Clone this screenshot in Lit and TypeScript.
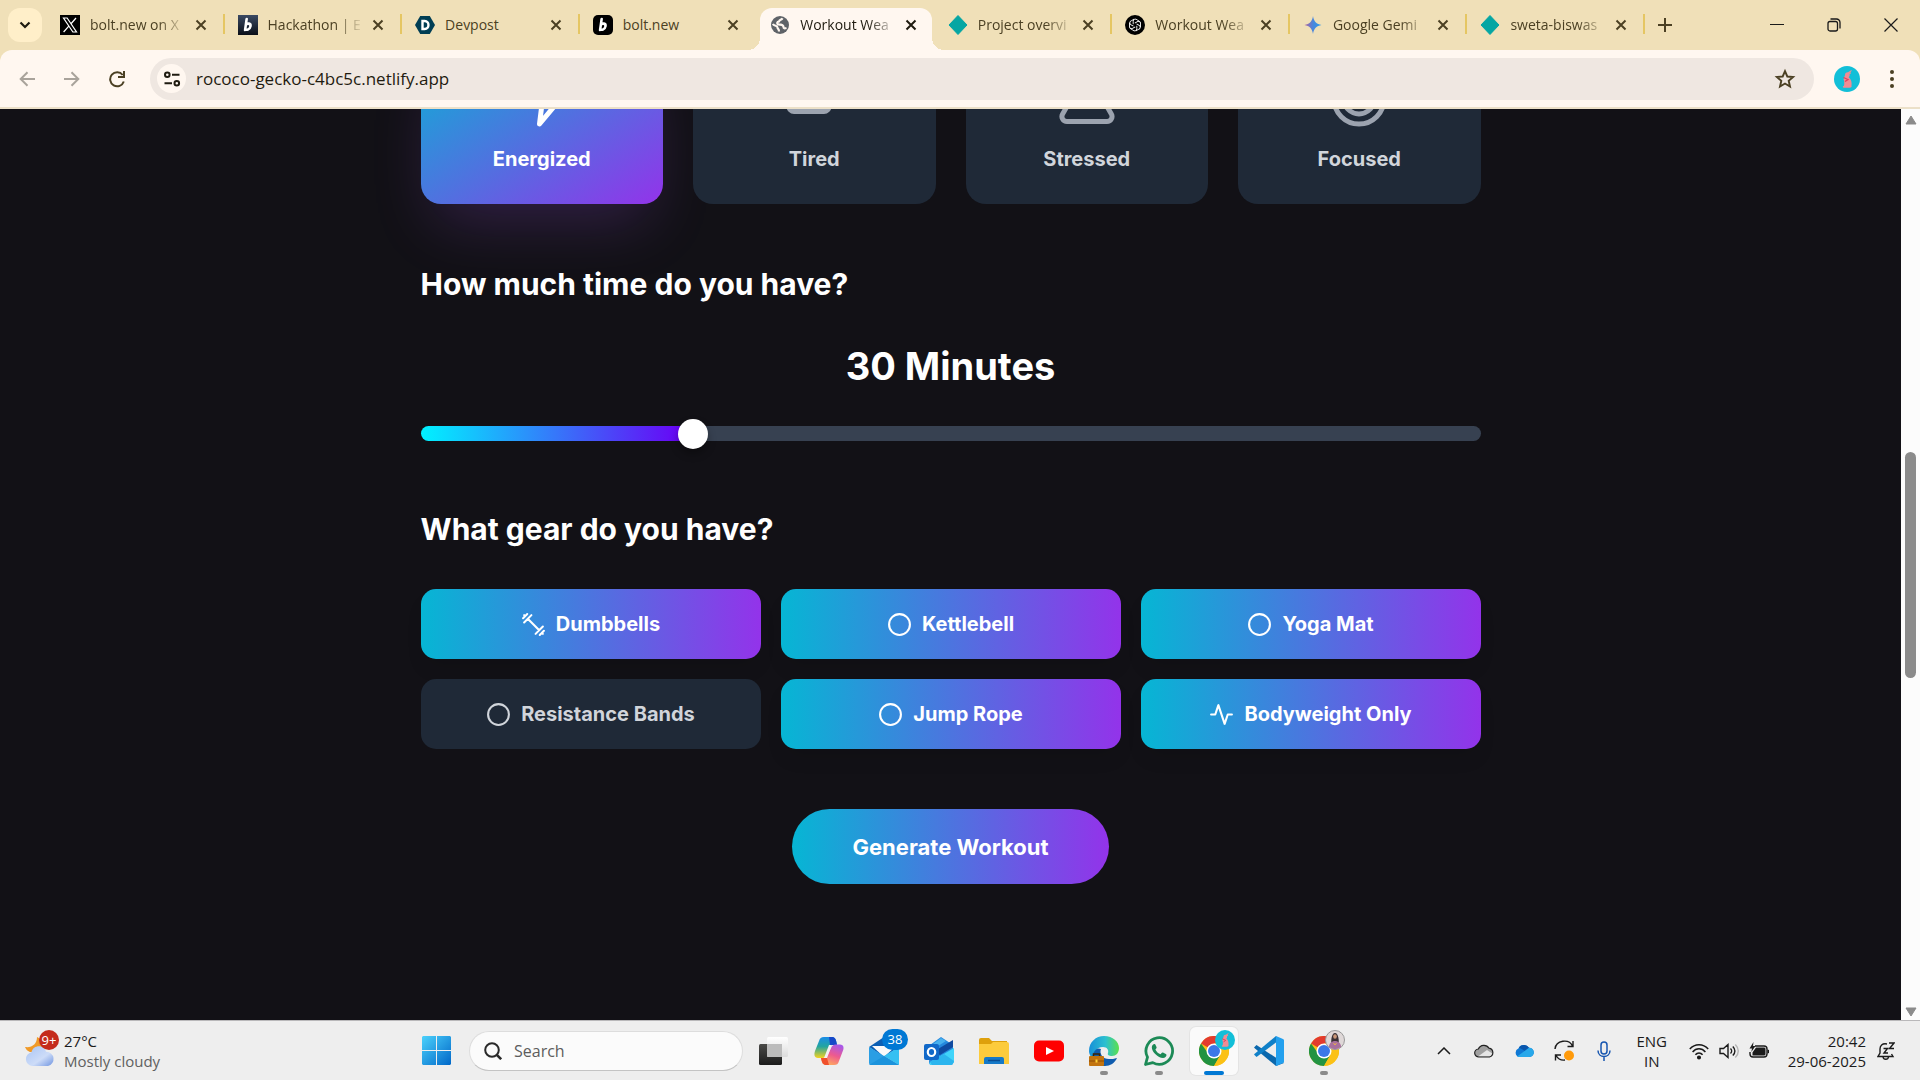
import { LitElement, html, css, svg, TemplateResult } from "lit";
import { customElement, state } from "lit/decorators.js";
import { classMap } from "lit/directives/class-map.js";
import { styleMap } from "lit/directives/style-map.js";

/* ---------- shared icons ---------- */

const closeIcon = html`<svg viewBox="0 0 12 12" width="12" height="12" fill="none" stroke="currentColor" stroke-width="2" aria-hidden="true"><path d="M1.5 1.5l9 9M10.500 1.500l-9 9"/></svg>`;

const boltShape = svg`<g transform="skewX(-8)"><path d="M9.200 4v11M9.200 9.600c1.200-1.400 4.900-1.700 4.900 1.700s-3.700 4.200-4.900 2.600" fill="none" stroke="#fff" stroke-width="2.600" stroke-linecap="round"/></g>`;

const netlifyIcon = html`<svg viewBox="0 0 20 20" width="20" height="20" aria-hidden="true"><path d="M10 .5 19 10l-9 9.500L1 10z" fill="#05a6a3" stroke="#05a6a3" stroke-linejoin="round"/></svg>`;

const petals = [0, 60, 120, 180, 240, 300].map(
  (a) => svg`<path d="M8.200 9.200V6.200a2.200 2.200 0 0 1 3.900-1.300l2.500 1.500" transform=${`rotate(${a} 10 10)`}/>`
);

const favicons: Record<string, TemplateResult> = {
  x: html`<svg viewBox="0 0 20 20" width="20" height="20" aria-hidden="true"><path d="M0 0h20v20H0z"/><path d="M3.500 3h3.600l9.400 14h-3.600zM16 3l-5.200 6M8.800 11.200 3.600 17" fill="none" stroke="#fff" stroke-width="1.200"/></svg>`,
  hackathon: html`<svg viewBox="0 0 20 20" width="20" height="20" aria-hidden="true"><defs><linearGradient id="hk" x2="0" y2="1"><stop stop-color="#3b4a63"/><stop offset="1" stop-color="#0a0f18"/></linearGradient></defs><path d="M0 0h20v20H0z" fill="url(#hk)"/>${boltShape}</svg>`,
  devpost: html`<svg viewBox="0 0 20 20" width="20" height="20" aria-hidden="true"><path d="M5.200 1h9.600L20 10l-5.200 9H5.200L0 10z" fill="#003e54"/><path d="M7.500 6h2.200c5 0 5 8 0 8H7.500z" fill="none" stroke="#fff" stroke-width="2.400"/></svg>`,
  bolt: html`<svg viewBox="0 0 20 20" width="20" height="20" aria-hidden="true"><rect width="20" height="20" rx="5"/>${boltShape}</svg>`,
  globe: html`<svg viewBox="0 0 20 20" width="20" height="20" aria-hidden="true"><circle cx="10" cy="10" r="9" fill="#5f6368"/><path d="M12.500 3.200c-1 2-3 1.300-3.500 3.300-2 0-2.500 2.500-.5 2.800 2.500 0 5 .2 5 2.700 0 1.500 1 1.500 3 1M2.800 9c1.500 2.500 4.500 1 4.700 3.500 0 1.500 1.500 1 1.500 4" fill="none" stroke="#fff7f0" stroke-width="2.200"/></svg>`,
  netlify: netlifyIcon,
  openai: html`<svg viewBox="0 0 20 20" width="20" height="20" aria-hidden="true"><circle cx="10" cy="10" r="10"/><g fill="none" stroke="#fff" stroke-width="0.900">${petals}</g></svg>`,
  gemini: html`<svg viewBox="0 0 20 20" width="20" height="20" aria-hidden="true"><defs><linearGradient id="gm"><stop stop-color="#b0609c"/><stop offset=".5" stop-color="#4a87dd"/><stop offset="1" stop-color="#2a9be8"/></linearGradient></defs><path d="M10 1c.8 5.500 3.500 8.200 8.500 9-5 .8-7.700 3.500-8.500 9-.8-5.500-3.500-8.200-8.500-9 5-.8 7.700-3.500 8.500-9z" fill="url(#gm)"/></svg>`,
};

const bunny = svg`<circle cx="13" cy="13" r="13" fill="#12bfd8"/><path d="M11 9c0-2 1.500-3 3-2.700L17.500 4c.6.3-.8 2.500-2.300 3.200C17.500 5.800 18 7 15.500 8.600c.5 1.300 0 2-.8 2.600 2.500 1.800 3.300 5.500 2.800 8.300.5 1.500-.5 2.200-2 2.200H10c-1.600 0-1.600-1.700 0-2 .6-3 .2-5-.4-6.500z" fill="#f08c94"/><path d="M9.500 11.500l4.500 2-3 2" fill="none" stroke="#e5405a" stroke-width="1.300"/>`;

/* Outline icons share one 24-unit grid with round strokes. */
const outline = (shape: unknown, size: number) => html`<svg viewBox="0 0 24 24" width=${size} height=${size} fill="none" stroke="currentColor" stroke-width="2" stroke-linecap="round" stroke-linejoin="round" aria-hidden="true">${shape}</svg>`;

const shapes: Record<string, unknown> = {
  zap: svg`<path d="M13 2 3 14h9l-1 8 10-12h-9z"/>`,
  battery: svg`<rect x="2" y="7" width="16" height="10" rx="2"/><path d="M22 11v2"/>`,
  triangle: svg`<path d="m21.730 18-8-14a2 2 0 0 0-3.480 0l-8 14A2 2 0 0 0 4 21h16a2 2 0 0 0 1.730-3"/>`,
  target: svg`<circle cx="12" cy="12" r="10"/><circle cx="12" cy="12" r="6"/><circle cx="12" cy="12" r="2"/>`,
  dumbbell: svg`<path d="m6.500 6.500 11 11M21 21l-1-1M3 3l1 1M18 22l4-4M2 6l4-4M3 10l7-7M14 21l7-7"/>`,
  circle: svg`<circle cx="12" cy="12" r="10"/>`,
  activity: svg`<path d="M22 12h-4l-3 9L9 3l-3 9H2"/>`,
};

/* ---------- browser frame ---------- */

interface Tab { icon: string; title: string; active?: boolean; line?: boolean; fade?: boolean }

const tabs: Tab[] = [
  { icon: "x", title: "bolt.new on X", line: true, fade: true },
  { icon: "hackathon", title: "Hackathon | E", line: true, fade: true },
  { icon: "devpost", title: "Devpost", line: true },
  { icon: "bolt", title: "bolt.new" },
  { icon: "globe", title: "Workout Wea", active: true, fade: true },
  { icon: "netlify", title: "Project overvi", line: true, fade: true },
  { icon: "openai", title: "Workout Wea", line: true, fade: true },
  { icon: "gemini", title: "Google Gemi", line: true, fade: true },
  { icon: "netlify", title: "sweta-biswas", line: true, fade: true },
];

@customElement("browser-bar")
class BrowserBar extends LitElement {
  static styles = css`
    :host { display: block; font-family: "Open Sans", "Noto Sans", sans-serif; color: #4b4023; background: #f0e0b8; }
    * { box-sizing: border-box; }
    button { border: 0; padding: 0; background: none; color: inherit; font: inherit; display: grid; place-items: center; }
    svg { display: block; flex: none; }
    .strip { display: flex; height: 50px; padding-left: 8px; align-items: stretch; }
    .search-tabs { width: 34px; height: 34px; margin: 8px 5px 0 0; border-radius: 12px; background: #ffefc9; color: #1f1b10; flex: none; }
    .tabs { display: grid; grid-template-columns: repeat(9, minmax(0, 1fr)); flex: 0 1 1598px; min-width: 0; }
    .tab { position: relative; display: flex; align-items: center; padding: 0 17px 0 13px; min-width: 0; font-size: 14px; }
    .tab-body { display: flex; align-items: center; flex: 1; gap: 10px; min-width: 0; }
    .title { flex: 1; min-width: 0; margin-right: -6px; overflow: hidden; white-space: nowrap; line-height: 20px; }
    .fade { mask-image: linear-gradient(to right, #000 68%, rgba(0, 0, 0, 0.1) 94%); }
    .lined::after { content: ""; position: absolute; right: 0; top: 14px; width: 2px; height: 20px; background: #e5c663; }
    .tab .close { width: 14px; height: 20px; }
    .active { color: #1f1b10; }
    .active::before { content: ""; position: absolute; inset: 8px 3px 0 3px; background: #fff7f0; border-radius: 12px 12px 0 0; }
    .active .tab-body { position: relative; }
    .foot { position: absolute; bottom: 0; width: 12px; height: 12px; }
    .foot-left { left: -9px; background: radial-gradient(circle at 0 0, transparent 12px, #fff7f0 12px); }
    .foot-right { right: -9px; background: radial-gradient(circle at 100% 0, transparent 12px, #fff7f0 12px); }
    .new { width: 40px; }
    .window { margin-left: auto; display: grid; grid-template-columns: repeat(3, 57px); color: #1a1a1a; padding-right: 1px; }
    .toolbar { display: flex; align-items: center; height: 59px; padding: 0 17px 0 16px; background: #fff7f0; border-bottom: 2px solid #ece0c8; border-radius: 12px 12px 0 0; }
    .nav { display: flex; gap: 23px; width: 134px; }
    .nav button { width: 22px; height: 22px; }
    .nav .off { color: #a9a39b; }
    .omni { flex: 1; display: flex; align-items: center; height: 42px; padding: 0 17px 0 7px; border-radius: 21px; background: #efe7e1; min-width: 0; }
    .site { width: 29px; height: 29px; border-radius: 50%; background: #fff7f0; color: #1f1b10; flex: none; }
    .url { flex: 1; border: 0; background: none; padding: 0 0 0 10px; min-width: 0; font: 17px/24px "Open Sans", "Noto Sans", sans-serif; color: #1f1b10; outline: 0; }
    .profile { width: 26px; margin-left: 20px; }
    .menu { width: 22px; margin-left: 21px; }
  `;

  render() {
    return html`
      <header>
        <div class="strip">
          <button class="search-tabs" aria-label="Search tabs"><svg viewBox="0 0 12 8" width="12" height="8" fill="none" stroke="currentColor" stroke-width="2.200"><path d="M1.500 1.500 6 6l4.500-4.500"/></svg></button>
          <nav class="tabs">
            ${tabs.map((t) => html`
              <div class=${classMap({ tab: true, active: !!t.active, lined: !!t.line })}>
                ${t.active ? html`<span class="foot foot-left"></span><span class="foot foot-right"></span>` : ""}
                <div class="tab-body">
                  ${favicons[t.icon]}
                  <span class=${classMap({ title: true, fade: !!t.fade })}>${t.title}</span>
                  <button class="close" aria-label="Close tab">${closeIcon}</button>
                </div>
              </div>`)}
          </nav>
          <button class="new" aria-label="New tab"><svg viewBox="0 0 14 14" width="14" height="14" fill="none" stroke="currentColor" stroke-width="2"><path d="M7 0v14M0 7h14"/></svg></button>
          <div class="window">
            <button aria-label="Minimise"><svg viewBox="0 0 14 14" width="14" height="14" stroke="currentColor"><path d="M0 6.500h14"/></svg></button>
            <button aria-label="Restore"><svg viewBox="0 0 14 14" width="14" height="14" fill="none" stroke="currentColor" stroke-width="1.300"><rect x="1" y="3.500" width="9.500" height="9.500" rx="2"/><path d="M3.500 1h6a3.500 3.500 0 0 1 3.500 3.500v6"/></svg></button>
            <button aria-label="Close window"><svg viewBox="0 0 14 14" width="14" height="14" stroke="currentColor" stroke-width="1.200"><path d="M.5.5l13 13M13.500.5l-13 13"/></svg></button>
          </div>
        </div>
        <div class="toolbar">
          <div class="nav">
            <button class="off" aria-label="Back"><svg viewBox="0 0 16 16" width="16" height="16" fill="none" stroke="currentColor" stroke-width="2"><path d="M16 8H2M8.500 1.200 1.700 8l6.800 6.800"/></svg></button>
            <button class="off" aria-label="Forward"><svg viewBox="0 0 16 16" width="16" height="16" fill="none" stroke="currentColor" stroke-width="2"><path d="M0 8h14M7.500 1.200 14.300 8l-6.800 6.800"/></svg></button>
            <button aria-label="Reload"><svg viewBox="0 0 18 18" width="18" height="18" fill="none" stroke="currentColor" stroke-width="2"><path d="M15.800 11.500A7 7 0 1 1 14.700 5M16 1v6h-6"/></svg></button>
          </div>
          <div class="omni">
            <button class="site" aria-label="Site information"><svg viewBox="0 0 18 18" width="18" height="18" fill="none" stroke="currentColor" stroke-width="2"><circle cx="4.300" cy="4.800" r="2.300"/><path d="M9 4.800h7.500M1.500 13.200h7.500"/><circle cx="13.800" cy="13.200" r="2.300"/></svg></button>
            <input class="url" aria-label="Address" .value=${"rococo-gecko-c4bc5c.netlify.app"} />
            <button aria-label="Bookmark this tab"><svg viewBox="0 0 24 24" width="24" height="24" fill="none" stroke="currentColor" stroke-width="1.900"><path d="m12 4.200 2.300 5.300 5.800.5-4.400 3.800 1.300 5.700-5-3-5 3 1.300-5.700L3.900 10l5.800-.5z"/></svg></button>
          </div>
          <button class="profile" aria-label="Profile"><svg viewBox="0 0 26 26" width="26" height="26">${bunny}</svg></button>
          <button class="menu" aria-label="Menu"><svg viewBox="0 0 4 18" width="4" height="18" fill="currentColor"><circle cx="2" cy="2" r="2"/><circle cx="2" cy="9" r="2"/><circle cx="2" cy="16" r="2"/></svg></button>
        </div>
      </header>`;
  }
}

/* ---------- workout form ---------- */

@customElement("workout-page")
class WorkoutPage extends LitElement {
  static styles = css`
    :host { display: flex; min-height: 0; background: #121116; font-family: Inter, sans-serif; color: #fff; }
    * { box-sizing: border-box; }
    .view { flex: 1; min-width: 0; overflow: hidden; }
    /* The view is scrolled: the tops of the mood cards lie above its edge. */
    .form { max-width: 1060px; margin: -70px auto 0; }
    button { border: 0; font: inherit; cursor: pointer; }
    svg { display: block; flex: none; }
    .moods { display: grid; grid-template-columns: repeat(4, 1fr); gap: 30px; }
    .mood { display: flex; flex-direction: column; align-items: center; gap: 15px; padding: 30px; border-radius: 20px; background: #1f2937; color: #d1d5db; font-size: 20px; font-weight: 700; line-height: 30px; }
    .mood svg { color: #9ca3af; }
    .mood.on { background: linear-gradient(to bottom right, #06b6d4, #9333ea); color: #fff; box-shadow: 0 31px 62px -15px rgba(168, 85, 247, 0.22); }
    .mood.on svg { color: #fff; }
    h2 { margin: 60px 0 40px; font-size: 30px; line-height: 40px; font-weight: 700; }
    .amount { display: block; text-align: center; font-size: 38px; line-height: 45px; font-weight: 700; }
    .range { display: block; appearance: none; width: 100%; height: 15px; margin: 37px 0 68px; border-radius: 8px; outline: 0;
      background: linear-gradient(to right, #00f2ff 0%, #6a00f5 var(--fill), #374151 var(--fill)); }
    .range::-webkit-slider-thumb { appearance: none; width: 30px; height: 30px; border-radius: 50%; background: #fff; box-shadow: 0 5px 8px rgba(0, 0, 0, 0.3); }
    .gear-title { margin-top: 0; }
    .gears { display: grid; grid-template-columns: repeat(3, 1fr); gap: 20px; }
    .gear { display: flex; align-items: center; justify-content: center; gap: 10px; height: 70px; border-radius: 15px; background: #1f2937; color: #d1d5db; font-size: 20px; font-weight: 700; }
    .gear.on { background: linear-gradient(to right, #06b6d4, #9333ea); color: #fff; box-shadow: 0 12px 19px -4px rgba(0, 0, 0, 0.1); }
    .go { display: block; margin: 60px auto 0; height: 75px; padding: 0 60px; border-radius: 38px; background: linear-gradient(to right, #06b6d4, #9333ea); color: #fff; font-size: 22px; font-weight: 700; }
    .scroll { display: flex; flex-direction: column; align-items: center; width: 19px; padding: 6px 0 3px; background: #fcfcfc; color: #8b8b8b; }
    .thumb { width: 11px; height: 226px; margin: 327px 0 auto; border-radius: 6px; background: #8b8b8b; }
  `;

  @state() minutes = 30;
  @state() mood = "Energized";
  @state() gear = new Set(["Dumbbells", "Kettlebell", "Yoga Mat", "Jump Rope", "Bodyweight Only"]);

  private moods = [["Energized", "zap"], ["Tired", "battery"], ["Stressed", "triangle"], ["Focused", "target"]];
  private gears = [["Dumbbells", "dumbbell"], ["Kettlebell", "circle"], ["Yoga Mat", "circle"], ["Resistance Bands", "circle"], ["Jump Rope", "circle"], ["Bodyweight Only", "activity"]];

  private toggle(name: string) {
    const next = new Set(this.gear);
    next.has(name) ? next.delete(name) : next.add(name);
    this.gear = next;
  }

  render() {
    const fill = `${((this.minutes - 10) / 80) * 100}%`;
    return html`
      <main class="view">
        <div class="form">
          <div class="moods">
            ${this.moods.map(([name, icon]) => html`
              <button class=${classMap({ mood: true, on: name === this.mood })} @click=${() => (this.mood = name)}>
                ${outline(shapes[icon], 60)}<span>${name}</span>
              </button>`)}
          </div>
          <h2><label for="minutes">How much time do you have?</label></h2>
          <output class="amount" for="minutes">${this.minutes} Minutes</output>
          <input id="minutes" class="range" type="range" min="10" max="90" step="5" .value=${String(this.minutes)}
            style=${styleMap({ "--fill": fill })} @input=${(e: Event) => (this.minutes = Number((e.target as HTMLInputElement).value))} />
          <h2 class="gear-title">What gear do you have?</h2>
          <div class="gears">
            ${this.gears.map(([name, icon]) => html`
              <button class=${classMap({ gear: true, on: this.gear.has(name) })} @click=${() => this.toggle(name)}>
                ${outline(shapes[icon], 25)}<span>${name}</span>
              </button>`)}
          </div>
          <button class="go">Generate Workout</button>
        </div>
      </main>
      <div class="scroll" aria-hidden="true">
        <svg viewBox="0 0 12 10" width="12" height="10"><path d="M6 1 11 9H1z" fill="currentColor" stroke="currentColor" stroke-linejoin="round"/></svg>
        <div class="thumb"></div>
        <svg viewBox="0 0 12 10" width="12" height="10"><path d="M6 9 11 1H1z" fill="currentColor" stroke="currentColor" stroke-linejoin="round"/></svg>
      </div>`;
  }
}

/* ---------- taskbar ---------- */

const chromeShape = svg`
  <circle cx="15" cy="15" r="15" fill="#fbc116"/>
  <path d="M15 15 2 7.500A15 15 0 0 1 28 7.500H15z" fill="#e33b2e"/>
  <path d="M15 15h-7.500L2 7.500A15 15 0 0 0 15 30l6.500-11.200z" fill="#229342"/>
  <path d="M15 7.500h13A15 15 0 0 1 15 30l6.500-11.200z" fill="#fbc116"/>
  <circle cx="15" cy="15" r="7.500" fill="#fff"/><circle cx="15" cy="15" r="6" fill="#3b78e7"/>`;

interface App { name: string; art: unknown; state?: string; badge?: unknown }

const apps: App[] = [
  { name: "Task view", art: svg`<defs><linearGradient id="tv" x2="0" y2="1"><stop stop-color="#4a4a48"/><stop offset="1" stop-color="#1b1b1b"/></linearGradient><linearGradient id="tw" x2="0" y2="1"><stop stop-color="#fff"/><stop offset="1" stop-color="#dcdcdc"/></linearGradient></defs><rect y="8" width="23" height="21" rx="1.500" fill="url(#tv)"/><rect x="8" y="1" width="21" height="20" rx="1.500" fill="url(#tw)"/><path d="M8 8h15v13H9.500A1.500 1.500 0 0 1 8 19.500z" fill="#bcbcbc"/>` },
  { name: "Copilot", art: svg`<defs><linearGradient id="ca" x2="0" y2="1"><stop stop-color="#1a8ce8"/><stop offset=".45" stop-color="#23a5a0"/><stop offset="1" stop-color="#f5d31d"/></linearGradient><linearGradient id="cb" x1=".7" x2=".3" y2="1"><stop stop-color="#a858e8"/><stop offset=".5" stop-color="#ee5a8e"/><stop offset="1" stop-color="#ffae5c"/></linearGradient></defs><path d="M10 1h8c3 0 4 2 5 8h-5l-5 9c-1 3-2 4-5 4H4c-4 0-4-4-3-7L5 5c1-3 2-4 5-4z" fill="url(#ca)"/><path d="M15 1h3c3 0 4 2 5 8h-7z" fill="#1648c8"/><path d="M20 29h-8c-3 0-4-2-5-7h5l5-10c1-2 2-3.500 5-3.500h4c4 0 4 4 3 6L25 25c-1 3-2 4-5 4z" fill="url(#cb)"/><path d="M15 29h-3c-3 0-4-2-5-7h6z" fill="#f0502c"/><path d="M18 9h-3l-5 13h3z" fill="#f4f0f4"/>` },
  { name: "Mail", art: svg`<path d="M0 11 15 1l15 10-15 10z" fill="#0c5fb4"/><path d="M3 10h24l-12 11z" fill="#fafafa"/><path d="M0 11 30 29H2a2 2 0 0 1-2-2z" fill="#2a9ee4"/><path d="M30 11v18L15 20z" fill="#35c0f2"/><path d="M0 29 15 20l15 9z" fill="#1c93dc"/>`, badge: html`<span class="count">38</span>` },
  { name: "Outlook", art: svg`<path d="M6 9 17 1l12 8v18a2 2 0 0 1-2 2H8a3 3 0 0 1-3-3z" fill="#2588dd"/><path d="m9 16 20-12v7L16 19z" fill="#0f4aa0"/><path d="m5 11 12-9 5 3L6 15z" fill="#48b0ee"/><path d="M30 12v13c0 2-2 4-4 4H8c-3 0-3-2-2-3z" fill="#40d4fa"/><path d="M6 26 20 18l10 7c0 2-2 4-4 4H8z" fill="#2cb5ee"/><rect y="8" width="15" height="16" rx="2" fill="#1168c8"/><ellipse cx="7.500" cy="16" rx="3.700" ry="4" fill="none" stroke="#fff" stroke-width="2.200"/>` },
  { name: "File Explorer", art: svg`<path d="M0 4a2 2 0 0 1 2-2h8l3 3h15v10H0z" fill="#dea00c"/><path d="M0 8h12l2-2h14a2 2 0 0 1 2 2v20H0z" fill="#fccb3c"/><path d="M5 28v-5a2 2 0 0 1 2-2h16a2 2 0 0 1 2 2v5z" fill="#1579c8"/><path d="M9 24.500h12" stroke="#0a4c92" stroke-width="1.500"/>` },
  { name: "YouTube", art: svg`<rect y="4.500" width="30" height="21" rx="5" fill="#f00"/><path d="m12 11 8 4-8 4z" fill="#fff"/>` },
  { name: "Edge", state: "run", art: svg`<defs><linearGradient id="ed"><stop stop-color="#1890d8"/><stop offset=".55" stop-color="#2cc0d0"/><stop offset="1" stop-color="#5be04c"/></linearGradient></defs><path d="M0 15C0 6 7 0 15 0c9 0 15 6 15 12 0 5-3 8-7 8-3 0-5-1-4-3 1-3-1-6-5-6C7 11 4 17 6 24 2 22 0 18 0 15z" fill="url(#ed)"/><path d="M12 13c-2 5 2 10 8 10 3 0 5 0 8-1-2 5-7 8-12 8C6 30 1 22 5 16c2-4 5-4 7-3z" fill="#0f5cae"/><rect y="20" width="15" height="10" rx="1" fill="#c2730e"/><path d="M4.500 20v-2h6v2" fill="none" stroke="#3b2508" stroke-width="1.500"/><path d="M0 25h15" stroke="#8c4d05"/><path d="M6.500 23.500h2v3h-2z" fill="#ffd034"/>` },
  { name: "WhatsApp", state: "run", art: svg`<path d="m1.500 28.500 2-7.300A13.300 13.300 0 1 1 8.800 26.600z" fill="none" stroke="#1c8a56" stroke-width="2.800" stroke-linejoin="round"/><path d="M10.500 8c-1.300 0-2.700 1.500-2.700 3.300C7.800 16 14 22 19 22c2 0 3.500-1.500 3.500-3 0-.6-.2-.8-.7-1.100l-2.800-1.400c-.7-.3-1 0-1.400.5l-1 1.200c-2.400-.9-4.200-2.600-5.200-4.800l1-1.200c.3-.4.3-.8.1-1.200l-1.200-2.500c-.2-.4-.4-.5-.8-.5z" fill="#1c8a56"/>` },
  { name: "Chrome", state: "current", art: chromeShape, badge: html`<svg class="face" viewBox="0 0 26 26" width="20" height="20">${bunny}</svg>` },
  { name: "Visual Studio Code", art: svg`<path d="M0 11.500 2.500 9 30 27l-8 3L1 12.500z" fill="#0b68ad"/><path d="M0 18.500 2.500 21 24 5l-2-5L1 17.500z" fill="#0f80c8"/><path d="m22 0 7 3a2 2 0 0 1 1 2v20a2 2 0 0 1-1 2l-7 3z" fill="#23a0ee"/><path d="M22 9v12l-8-6z" fill="#eee"/>` },
  { name: "Chrome, second profile", state: "run", art: chromeShape, badge: html`<svg class="face" viewBox="0 0 20 20" width="20" height="20"><circle cx="10" cy="10" r="9.500" fill="#dfd8d8" stroke="#999"/><path d="M6.500 15c-.8-4 0-12 3.500-12s4.300 8 3.500 12z" fill="#3a3034"/><ellipse cx="10" cy="6.500" rx="1.800" ry="2.300" fill="#c99678"/><path d="M4 17c0-4 3-6 6-6s6 2 6 6a9.500 9.500 0 0 1-12 0z" fill="#a8709c"/><path d="m8.500 13 1.500 2 1.500-2" fill="none" stroke="#e8b04a"/></svg>` },
];

@customElement("task-bar")
class TaskBar extends LitElement {
  static styles = css`
    :host { box-sizing: border-box; display: grid; grid-template-columns: 414px 1fr auto; align-items: center; height: 60px; background: #eee; border-top: 1px solid #b9b8ba; font: 15px/20px "Open Sans", "Noto Sans", sans-serif; color: #1b1b1b; }
    * { box-sizing: border-box; }
    svg { display: block; flex: none; }
    button { border: 0; padding: 0; background: none; color: inherit; font: inherit; }
    .weather { display: flex; align-items: center; gap: 9px; padding-left: 25px; text-align: left; justify-self: start; }
    .art { position: relative; display: block; }
    .alerts { position: absolute; left: 14px; top: -6px; width: 20px; height: 20px; border-radius: 50%; background: #c42b1c; color: #fff; font-size: 13px; text-align: center; }
    .sub { color: #606060; }
    .mid { display: flex; align-items: center; }
    .start { display: grid; place-items: center; width: 44px; height: 48px; }
    .search { display: flex; align-items: center; gap: 12px; width: 274px; height: 40px; margin: 0 7px 0 11px; padding: 0 14px; border: 1px solid #ddd; border-bottom-color: #c4c4c4; border-radius: 20px; background: #fbfbfb; }
    .search input { flex: 1; min-width: 0; border: 0; padding: 0; background: none; outline: 0; font: 16px/24px "Open Sans", "Noto Sans", sans-serif; }
    .search input::placeholder { color: #5d5d5d; opacity: 1; }
    .apps { display: flex; gap: 7px; }
    .app { position: relative; display: grid; place-items: center; width: 48px; height: 48px; border-radius: 6px; }
    .current { background: #fafafa; box-shadow: 0 0 0 1px #e4e4e4; }
    .run::after, .current::after { content: ""; position: absolute; bottom: 0; width: 8px; height: 4px; border-radius: 2px; background: #8a8a8a; }
    .current::after { width: 20px; background: #0078d4; }
    .count { position: absolute; left: 22px; top: 2px; width: 26px; height: 21px; border-radius: 11px; background: #0078d4; color: #fff; font-size: 13px; }
    .face { position: absolute; left: 25px; top: 3px; }
    .tray { display: flex; align-items: center; padding-right: 25px; }
    .small { display: grid; place-items: center; width: 40px; height: 40px; }
    .lang { width: 56px; text-align: center; }
    .status { display: flex; gap: 10px; padding: 0 11px 0 9px; }
    .clock { text-align: right; padding: 0 11px 0 8px; }
    .clock span, .lang span, .weather span span { display: block; }
  `;

  render() {
    return html`
      <button class="weather">
        <span class="art">
          <svg viewBox="0 0 30 30" width="30" height="30"><defs><linearGradient id="cl" x2="1" y2="1"><stop stop-color="#a8c4f4"/><stop offset=".6" stop-color="#cddcf8"/><stop offset="1" stop-color="#6f94e0"/></linearGradient></defs><path d="M0 11c7 1 12-3 12-10 7 3 9 10 5 15H5c-3-1-4-3-5-5z" fill="#f09a28"/><path d="M7 30a7 7 0 0 1-.5-13.800C8 8.500 19 8 21 15.800A7.200 7.200 0 0 1 23 30z" fill="url(#cl)"/></svg>
          <span class="alerts">9+</span>
        </span>
        <span><span>27°C</span><span class="sub">Mostly cloudy</span></span>
      </button>
      <div class="mid">
        <button class="start" aria-label="Start"><svg viewBox="0 0 29 29" width="29" height="29"><defs><linearGradient id="wn" x2="1" y2="1" gradientUnits="userSpaceOnUse" gradientTransform="scale(29)"><stop stop-color="#4cd2fc"/><stop offset="1" stop-color="#0067c8"/></linearGradient></defs><path d="M1 0h13v14H0V1zM15 0h13l1 1v13H15zM0 15h14v14H1l-1-1zM15 15h14v13l-1 1H15z" fill="url(#wn)"/></svg></button>
        <label class="search">
          <svg viewBox="0 0 18 18" width="18" height="18" fill="none" stroke="#2a2a2a" stroke-width="2"><circle cx="8" cy="8" r="6.800"/><path d="m12.800 12.800 4.400 4.400" stroke-width="2.600"/></svg>
          <input type="search" aria-label="Search" placeholder="Search" />
        </label>
        <div class="apps">
          ${apps.map((a) => html`
            <button class=${classMap({ app: true, run: a.state === "run", current: a.state === "current" })} aria-label=${a.name}>
              <svg viewBox="0 0 30 30" width="30" height="30">${a.art}</svg>${a.badge ?? ""}
            </button>`)}
        </div>
      </div>
      <div class="tray">
        <button class="small" aria-label="Hidden icons"><svg viewBox="0 0 14 8" width="14" height="8" fill="none" stroke="#1b1b1b" stroke-width="1.500"><path d="M1 7l6-6 6 6"/></svg></button>
        <button class="small" aria-label="Cloud"><svg viewBox="0 0 20 15" width="20" height="15"><path d="M5 14a4 4 0 0 1-.6-8A6 6 0 0 1 15 5.200 4.500 4.500 0 0 1 15.500 14z" fill="#a0a0a0"/><path d="M4 13.500 13 7l6 4-2 2.500z" fill="#e6e6e6"/><path d="M5 14a4 4 0 0 1-.6-8A6 6 0 0 1 15 5.200 4.500 4.500 0 0 1 15.500 14z" fill="none" stroke="#222" stroke-width="1.200"/></svg></button>
        <button class="small" aria-label="OneDrive"><svg viewBox="0 0 20 15" width="20" height="15"><path d="M5 14a4.500 4.500 0 0 1-.6-8.500A6 6 0 0 1 15 4.800 4.600 4.600 0 0 1 15.500 14z" fill="#0f78d4"/><path d="M5 4.500A6 6 0 0 1 15 4.800L11 8z" fill="#0a56ac"/><path d="M3 13.500 12 7l3-2.200A4.600 4.600 0 0 1 15.500 14H5z" fill="#28a8ea"/></svg></button>
        <button class="small" aria-label="Updates"><svg viewBox="0 0 20 21" width="20" height="21" fill="none" stroke="#1b1b1b" stroke-width="1.400"><path d="M1 9C2 0 15-1.500 18.500 6M19 1v5.500h-5.500M7 15H1.500v5.500M2 15.500c2 3.500 5 5 9 4.500"/><circle cx="15" cy="15.500" r="5" fill="#ff9a0a" stroke="none"/></svg></button>
        <button class="small" aria-label="Microphone"><svg viewBox="0 0 14 20" width="14" height="20" fill="none" stroke="#1756b0" stroke-width="1.500"><rect x="4" y="1" width="6" height="12" rx="3"/><path d="M1 9.500c0 8 12 8 12 0M7 15.500V20"/></svg></button>
        <button class="lang"><span>ENG</span><span>IN</span></button>
        <button class="status" aria-label="Network, sound and battery">
          <svg viewBox="0 0 20 20" width="20" height="20" fill="none" stroke="#1b1b1b" stroke-width="1.500"><path d="M.8 8c5-5.800 13.400-5.800 18.400 0M3.600 11c3.600-4.200 9.200-4.200 12.800 0M6.400 13.800c2-2.400 5.200-2.400 7.200 0"/><circle cx="10" cy="16.500" r="1.300" fill="#1b1b1b"/></svg>
          <svg viewBox="0 0 20 20" width="20" height="20" fill="none" stroke="#1b1b1b" stroke-width="1.400"><path d="M1 7.500h3.500L9 3.500v13l-4.500-4H1zM11.500 7.500c1.500 1.500 1.500 3.500 0 5M13.800 5.500c2.800 2.800 2.800 6.200 0 9"/><path d="M16.300 3.500c4 4 4 9 0 13" stroke="#b5b5b5"/></svg>
          <svg viewBox="0 0 20 20" width="20" height="20"><path d="M6 5h9a3 3 0 0 1 3 3v5a3 3 0 0 1-3 3H4a3 3 0 0 1-3-3v-2" fill="none" stroke="#1b1b1b" stroke-width="1.400"/><path d="M7 6.500h8.500l1 1v6l-1 1H3.500v-3zM18.500 8.500l1.500.5v3l-1.500.5zM4.500 1 .5 7.500H3L2.300 11l4.200-6H4z" fill="#1b1b1b"/></svg>
        </button>
        <button class="clock"><span>20:42</span><span>29-06-2025</span></button>
        <button aria-label="Notifications"><svg viewBox="0 0 18 20" width="18" height="20" fill="none" stroke="#1b1b1b" stroke-width="1.400"><path d="M10 3C5 2 3 5 3 8v4l-2 3.500h15L14.500 13M6 16c.5 3 5 3 5.500 0M12 2h5l-4.500 5.500H17M6.500 7.500h4L7 12h4"/></svg></button>
      </div>`;
  }
}

@customElement("app-root")
class AppRoot extends LitElement {
  static styles = css`
    :host { display: grid; grid-template-rows: auto minmax(0, 1fr) auto; height: 100vh; overflow: hidden; }
  `;

  render() {
    return html`<browser-bar></browser-bar><workout-page></workout-page><task-bar></task-bar>`;
  }
}
